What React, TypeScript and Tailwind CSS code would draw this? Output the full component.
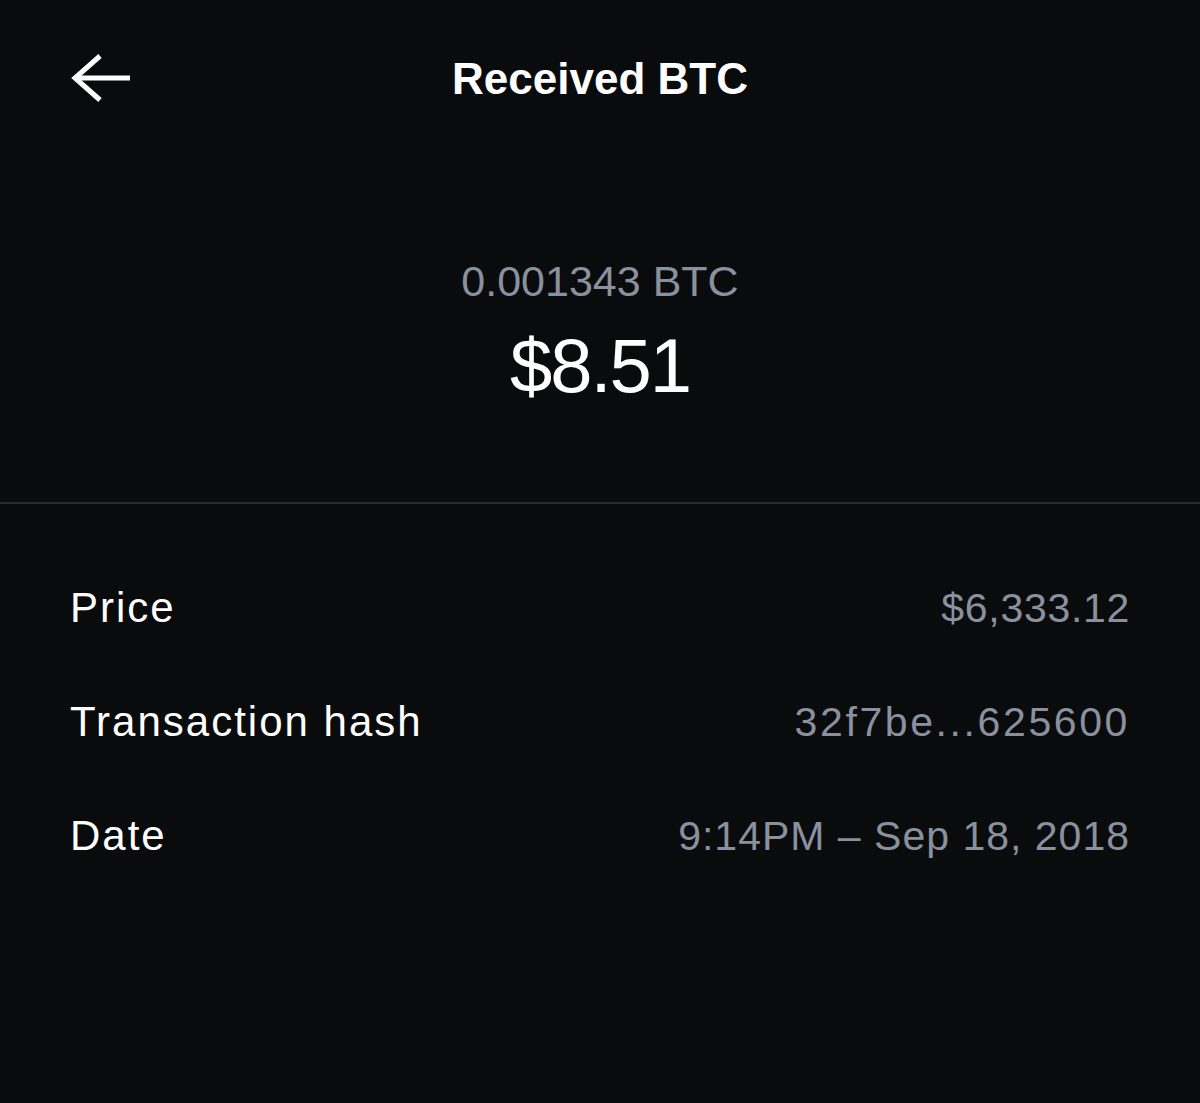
import React from "react";

const rows = [
  { label: "Price", value: "$6,333.12", track: "tracking-[0.7px]" },
  { label: "Transaction hash", value: "32f7be...625600", track: "tracking-[2.6px]" },
  { label: "Date", value: "9:14PM – Sep 18, 2018", track: "tracking-[1px]" },
];

export default function App() {
  return (
    <div
      className="w-[1200px] h-[1103px] bg-[#0a0b0d] text-white overflow-hidden"
      style={{ fontFamily: '"Liberation Sans", Arial, sans-serif' }}
    >
      {/* Header */}
      <div className="relative h-[158px] flex items-center justify-center">
        <button className="absolute left-[70px] top-[54px] w-[62px] h-[48px] flex items-center">
          <svg width="60" height="48" viewBox="0 0 60 48" fill="none">
            <path d="M5 24 H60" stroke="#ffffff" strokeWidth="5" />
            <path d="M30 2 L5 24 L30 46" stroke="#ffffff" strokeWidth="5" strokeLinejoin="miter" />
          </svg>
        </button>
        <h1 className="text-[44px] leading-[44px] font-bold">Received BTC</h1>
      </div>

      {/* Amount */}
      <div className="pt-[101px] pb-[98px] flex flex-col items-center">
        <div className="text-[43px] leading-[44px] text-[#8a919e]">0.001343 BTC</div>
        <div className="mt-[25px] text-[76px] leading-[76px] tracking-[-2px]">$8.51</div>
      </div>

      <div className="h-[2px] bg-[#2a2b2f]" />

      {/* Rows */}
      <div className="px-[70px] pt-[84px] flex flex-col gap-[74px]">
        {rows.map((r) => (
          <div key={r.label} className="flex items-center justify-between leading-[40px]">
            <span className="text-[42px] tracking-[2px]">{r.label}</span>
            <span className={`text-[41px] text-[#8a919e] ${r.track}`}>{r.value}</span>
          </div>
        ))}
      </div>
    </div>
  );
}
